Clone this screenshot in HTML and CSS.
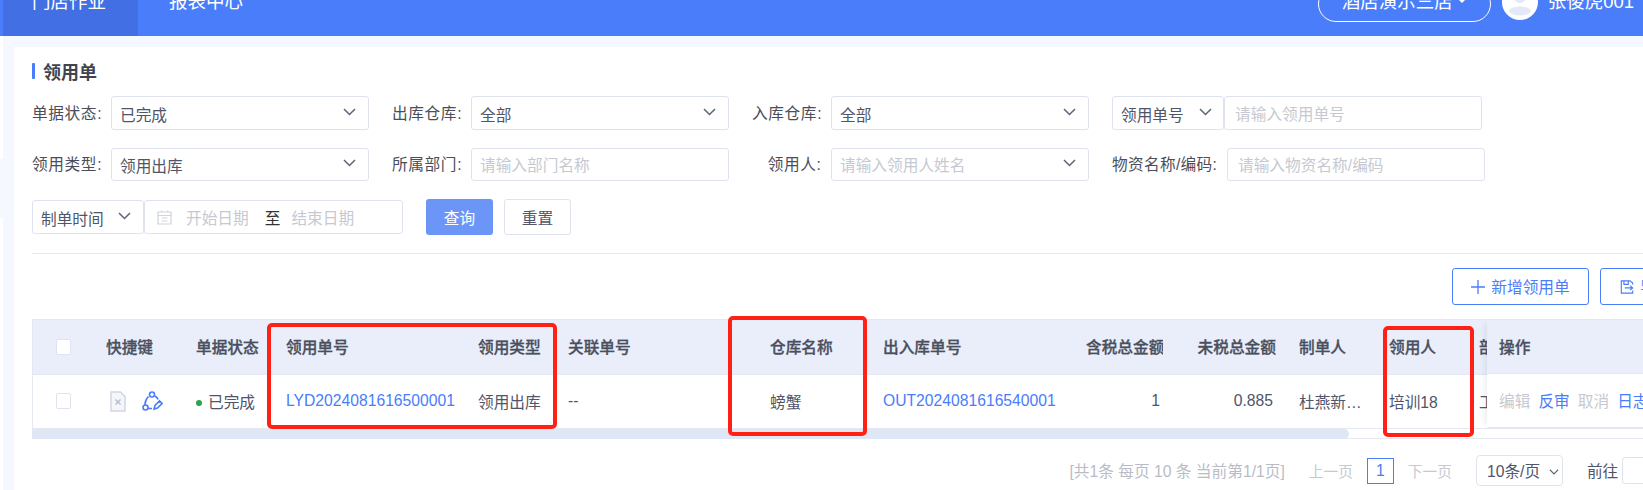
FILE: index.html
```html
<!DOCTYPE html>
<html lang="zh-CN">
<head>
<meta charset="utf-8">
<title>领用单</title>
<link rel="stylesheet" href="styles.css">
</head>
<body>
<header class="topbar">
  <div class="topbar-inner">
    <nav class="nav">
      <a class="nav-item nav-active">门店作业</a>
      <a class="nav-item nav-second">报表中心</a>
    </nav>
    <div class="top-right">
      <div class="store">酒店演示三店<span class="caret"></span></div>
      <svg class="avatar" viewBox="0 0 36 36"><circle cx="18" cy="18" r="18" fill="#fff"/><circle cx="18" cy="13" r="6" fill="#e3e9f8"/><ellipse cx="18" cy="27" rx="11" ry="4.5" fill="#e3e9f8"/></svg>
      <span class="user">张俊虎001</span>
    </div>
  </div>
</header>
<main class="page">
  <section class="card">
    <h1 class="title">领用单</h1>
    <div class="form-row">
      <div class="field"><span class="label">单据状态:</span><div class="control"><span class="value">已完成</span><svg class="chev" viewBox="0 0 13 8"><path d="M1 1l5.500 5.500L12 1"/></svg></div></div>
      <div class="field"><span class="label">出库仓库:</span><div class="control"><span class="value">全部</span><svg class="chev" viewBox="0 0 13 8"><path d="M1 1l5.500 5.500L12 1"/></svg></div></div>
      <div class="field"><span class="label">入库仓库:</span><div class="control"><span class="value">全部</span><svg class="chev" viewBox="0 0 13 8"><path d="M1 1l5.500 5.500L12 1"/></svg></div></div>
      <div class="combo">
        <div class="control combo-select"><span class="value">领用单号</span><svg class="chev" viewBox="0 0 13 8"><path d="M1 1l5.500 5.500L12 1"/></svg></div>
        <div class="control combo-input"><span class="placeholder">请输入领用单号</span></div>
      </div>
    </div>
    <div class="form-row form-row-second">
      <div class="field"><span class="label">领用类型:</span><div class="control"><span class="value">领用出库</span><svg class="chev" viewBox="0 0 13 8"><path d="M1 1l5.500 5.500L12 1"/></svg></div></div>
      <div class="field"><span class="label">所属部门:</span><div class="control"><span class="placeholder">请输入部门名称</span></div></div>
      <div class="field"><span class="label">领用人:</span><div class="control"><span class="placeholder">请输入领用人姓名</span><svg class="chev" viewBox="0 0 13 8"><path d="M1 1l5.500 5.500L12 1"/></svg></div></div>
      <div class="combo combo-labeled"><span class="label">物资名称/编码:</span><div class="control combo-input"><span class="placeholder">请输入物资名称/编码</span></div></div>
    </div>
    <div class="form-row form-row-last">
      <div class="control time-select"><span class="value">制单时间</span><svg class="chev" viewBox="0 0 13 8"><path d="M1 1l5.500 5.500L12 1"/></svg></div>
      <div class="control date-range">
        <svg class="cal" viewBox="0 0 15 15"><path d="M1 2h13v12H1zM1 5.500h13M4.500 8h6M4.500 11h6M4.500 .5v2M10.500 .5v2"/></svg>
        <span class="placeholder date-start">开始日期</span><span class="to">至</span><span class="placeholder">结束日期</span>
      </div>
      <button class="btn btn-primary">查询</button>
      <button class="btn btn-default">重置</button>
    </div>
    <div class="divider"></div>
    <div class="toolbar">
      <button class="btn-outline"><svg class="tool-icon" viewBox="0 0 14 14"><path d="M7 0v14M0 7h14"/></svg>新增领用单</button>
      <button class="btn-outline btn-save"><svg class="tool-icon" viewBox="0 0 15 16"><path d="M14 5V3.500L11 1H1v14h13v-3M4 1v4h5V1M5 9h9M11 6.500L14 9l-3 2.500"/></svg>导出</button>
    </div>
    <div class="table-wrap">
      <table class="data">
        <colgroup>
          <col class="c-check"><col class="c-keys"><col class="c-status"><col class="c-no"><col class="c-type"><col class="c-rel"><col class="c-wh"><col class="c-out"><col class="c-tax"><col class="c-notax"><col class="c-maker"><col class="c-user"><col class="c-dept">
        </colgroup>
        <thead>
          <tr>
            <th><span class="checkbox"></span></th>
            <th>快捷键</th>
            <th>单据状态</th>
            <th>领用单号</th>
            <th>领用类型</th>
            <th>关联单号</th>
            <th>仓库名称</th>
            <th>出入库单号</th>
            <th class="num">含税总金额</th>
            <th class="num">未税总金额</th>
            <th class="pad">制单人</th>
            <th>领用人</th>
            <th>部门</th>
          </tr>
        </thead>
        <tbody>
          <tr>
            <td><span class="checkbox"></span></td>
            <td>
              <div class="quick">
                <svg class="q-doc" viewBox="0 0 16 21"><path d="M1 1h9.500L15 5.500V20H1z"/><path class="q-x" d="M5.500 8.500l5 5M10.500 8.500l-5 5"/></svg>
                <svg class="q-edit" viewBox="0 0 21 21"><circle cx="10" cy="3.500" r="2.500"/><circle cx="3.500" cy="16.500" r="2.500"/><path d="M6.500 5.500C4 8 2.800 10.500 3 14M13 5c1.500 1 2.500 2 3.200 3.500M6.200 17.500H10M12 18l1-3.500 4.500-4.500 2.500 2.500-4.500 4.500z"/></svg>
              </div>
            </td>
            <td><span class="dot"></span>已完成</td>
            <td><a class="link">LYD2024081616500001</a></td>
            <td>领用出库</td>
            <td>--</td>
            <td>螃蟹</td>
            <td><a class="link">OUT2024081616540001</a></td>
            <td class="num num-cell">1</td>
            <td class="num num-cell">0.885</td>
            <td class="pad">杜燕新…</td>
            <td>培训18</td>
            <td>工程部</td>
          </tr>
        </tbody>
      </table>
      <div class="fixed-col">
        <div class="fixed-head">操作</div>
        <div class="fixed-cell"><span class="muted">编辑</span><a class="link">反审</a><span class="muted">取消</span><a class="link">日志</a></div>
      </div>
      <div class="scroll-track"><div class="scroll-thumb"></div></div>
    </div>
    <div class="pager">
      <span class="pager-total">[共1条 每页 10 条 当前第1/1页]</span>
      <span class="pager-prev">上一页</span>
      <span class="pager-cur">1</span>
      <span class="pager-next">下一页</span>
      <div class="pager-size">10条/页<svg class="chev chev-small" viewBox="0 0 13 8"><path d="M1 1l5.500 5.500L12 1"/></svg></div>
      <span class="pager-go">前往</span>
      <span class="pager-input"></span>
      <span class="pager-go">页</span>
    </div>
  </section>
  <div class="mark mark-a"></div>
  <div class="mark mark-b"></div>
  <div class="mark mark-c"></div>
</main>
</body>
</html>
```
FILE: styles.css
```css
* { box-sizing: border-box; }
html, body { margin: 0; height: 490px; overflow: hidden; }
body {
  width: 1643px;
  background: #fff;
  font-family: "Liberation Sans", "Noto Sans CJK SC", sans-serif;
  font-size: 15.700px;
  color: #50556a;
}
.topbar { height: 36px; background: #4a7dfa; overflow: hidden; }
.topbar-inner {
  height: 72px;
  margin-top: -36px;
  display: flex;
  justify-content: space-between;
  color: #fff;
}
.nav { display: flex; padding-left: 3px; }
.nav-item { font-size: 18.500px; display: flex; align-items: center; height: 72px; }
.nav-active { width: 135px; padding-left: 29px; background: #4270e4; }
.nav-second { padding-left: 31px; }
.top-right { display: flex; align-items: center; padding-right: 9px; }
.store {
  width: 173px;
  height: 36px;
  margin-top: 8px;
  border: 1px solid #fff;
  border-radius: 18px;
  display: flex;
  align-items: center;
  padding: 0 0 8px 23px;
  font-size: 18.500px;
  white-space: nowrap;
}
.caret {
  margin-left: 4px;
  border: 5px solid transparent;
  border-top-color: #fff;
  border-bottom-width: 0;
}
.avatar { width: 36px; height: 36px; margin: 4px 10px 0 11px; }
.user { font-size: 18.500px; white-space: nowrap; }
.page {
  position: relative;
  height: 454px;
  margin-left: 3px;
  padding: 11px 0 0 11px;
  background: #f5f8ff;
}
.card { width: 1680px; height: 443px; background: #fff; padding: 14px 0 0 18px; }
.title {
  margin: 0 0 15px;
  height: 20px;
  font-size: 18px;
  font-weight: 700;
  color: #40444f;
  display: flex;
  align-items: center;
  gap: 8px;
}
.title::before {
  content: "";
  width: 3px;
  height: 16px;
  border-radius: 1px;
  background: #4a7dfa;
}
.form-row { display: flex; gap: 23px; height: 34px; margin-bottom: 18px; }
.form-row-second { height: 33px; margin-bottom: 18px; }
.form-row-last { height: 36px; gap: 0; align-items: center; }
.field { width: 337px; display: flex; justify-content: space-between; align-items: center; }
.label { white-space: nowrap; color: #4a4e5a; margin-top: -2px; letter-spacing: 0.600px; }
.field .label { width: 69.500px; text-align: right; }
.control {
  height: 100%;
  width: 258px;
  flex: none;
  background: #fff;
  border: 1px solid #dfe3f0;
  border-radius: 3px;
  display: flex;
  align-items: center;
  justify-content: space-between;
  padding: 0 12px 0 8px;
}
.value { white-space: nowrap; color: #50556a; margin-top: 2px; }
.placeholder { white-space: nowrap; color: #c6c9d1; }
.chev { width: 13px; height: 8px; flex: none; margin-top: -3px; }
.chev path { fill: none; stroke: #5d6477; stroke-width: 1.500; }
.combo { display: flex; align-items: center; height: 100%; }
.combo-select { width: 112px; padding-right: 11px; }
.combo-input { justify-content: flex-start; padding-left: 10px; }
.combo-labeled .label { width: 106px; margin-right: 9px; letter-spacing: 0.300px; }
.time-select { width: 112px; height: 34px; }
.date-range { width: 259px; height: 34px; justify-content: flex-start; padding-left: 12px; }
.cal { width: 15px; height: 15px; flex: none; }
.cal path { fill: none; stroke: #cfd3dc; stroke-width: 1.200; }
.date-start { margin-left: 14px; }
.to { margin: 0 11px 0 16px; color: #333; }
.btn {
  height: 36px;
  border-radius: 3px;
  font: inherit;
  cursor: pointer;
}
.btn-primary { width: 67px; margin-left: 23px; border: 0; background: #6c95f8; color: #fff; }
.btn-default { width: 67px; margin-left: 11px; border: 1px solid #dfe3f0; background: #fff; color: #50556a; }
.divider { height: 1px; margin-top: 18px; background: #e6e9f3; }
.toolbar { display: flex; justify-content: flex-end; gap: 11px; margin: 14px 0; }
.btn-outline {
  height: 37px;
  width: 137px;
  border: 1px solid #4a7dfa;
  border-radius: 3px;
  background: #fff;
  color: #4a7dfa;
  font: inherit;
  display: flex;
  align-items: center;
  justify-content: center;
  gap: 6px;
  padding: 0;
}
.btn-save { width: 94px; justify-content: flex-start; padding-left: 19px; }
.tool-icon { width: 14px; height: 14px; flex: none; }
.tool-icon path { fill: none; stroke: #4a7dfa; stroke-width: 1.300; }
.table-wrap { position: relative; width: 1662px; height: 120px; border: 1px solid #e4e8f3; border-width: 1px 0 1px 1px; }
.data { border-collapse: collapse; table-layout: fixed; width: 1661px; }
.c-check { width: 73px; }
.c-keys { width: 90px; }
.c-status { width: 90px; }
.c-no { width: 192px; }
.c-type { width: 90px; }
.c-rel { width: 202px; }
.c-wh { width: 113px; }
.c-out { width: 203px; }
.c-tax { width: 77px; }
.c-notax { width: 113px; }
.c-maker { width: 113px; }
.c-user { width: 90px; }
.data th, .data td {
  height: 54px;
  padding: 0;
  text-align: left;
  white-space: nowrap;
  overflow: hidden;
  border-bottom: 1px solid #e4e8f3;
}
.data th { background: #e9eefa; font-weight: 500; color: #4a4f5e; -webkit-text-stroke: 0.300px #4a4f5e; }
.data th.num, .data td.num { text-align: right; }
.data td.num-cell { padding-right: 3px; }
.data th.pad, .data td.pad { padding-left: 23px; }
.checkbox {
  display: block;
  width: 15px;
  height: 16px;
  margin-left: 23px;
  background: #fff;
  border: 1px solid #dfe3ef;
  border-radius: 2px;
}
.quick { display: flex; align-items: center; gap: 16px; padding-left: 4px; }
.q-doc { width: 16px; height: 21px; }
.q-doc path { fill: #f4f6fb; stroke: #d0d6e5; stroke-width: 1.500; }
.q-doc .q-x { stroke: #b6bdcf; }
.q-edit { width: 21px; height: 21px; }
.q-edit circle, .q-edit path { fill: none; stroke: #4a7dfa; stroke-width: 1.600; }
.dot {
  display: inline-block;
  width: 6px;
  height: 6px;
  border-radius: 50%;
  background: #2ba24c;
  margin-right: 6px;
  vertical-align: 2px;
}
.link { color: #4a7dfa; }
.fixed-col {
  position: absolute;
  left: 1454px;
  top: 0;
  width: 207px;
  height: 108px;
  background: #fff;
  box-shadow: -6px 0 6px -4px rgba(60, 70, 100, 0.10);
}
.fixed-head {
  height: 54px;
  background: #e9eefa;
  padding-left: 12px;
  display: flex;
  align-items: center;
  font-weight: 500;
  color: #4a4f5e;
  -webkit-text-stroke: 0.300px #4a4f5e;
  border-bottom: 1px solid #e4e8f3;
}
.fixed-cell {
  height: 54px;
  padding-left: 12px;
  display: flex;
  align-items: center;
  gap: 8px;
  border-bottom: 1px solid #e4e8f3;
  white-space: nowrap;
}
.muted { color: #c6c9d1; }
.scroll-track { height: 10px; }
.scroll-thumb { width: 1316px; height: 10px; background: #dfe6f5; border-radius: 0 5px 5px 0; }
.pager { display: flex; align-items: center; justify-content: flex-end; height: 31px; margin-top: 16px; }
.pager-total { color: #b9bcc6; white-space: nowrap; }
.pager-prev { color: #c6c9d1; margin-left: 24px; white-space: nowrap; font-size: 14.700px; }
.pager-cur {
  width: 27px;
  height: 26px;
  margin-left: 14px;
  border: 1px solid #4a7dfa;
  color: #4a7dfa;
  display: flex;
  align-items: center;
  justify-content: center;
}
.pager-next { color: #c6c9d1; margin-left: 14px; white-space: nowrap; font-size: 14.700px; }
.pager-size {
  width: 87px;
  height: 31px;
  margin-left: 24px;
  border: 1px solid #dfe3f0;
  border-radius: 4px;
  display: flex;
  align-items: center;
  gap: 9px;
  padding-left: 10px;
  white-space: nowrap;
}
.chev-small { width: 10px; height: 6px; margin-top: 2px; }
.pager-go { white-space: nowrap; }
.pager-size + .pager-go { margin-left: 24px; }
.pager-input {
  width: 51px;
  height: 27px;
  margin: 0 5px 0 4px;
  border: 1px solid #dfe3f0;
  border-radius: 3px;
}
.mark { position: absolute; border: 4px solid #ff2016; border-radius: 5px; }
.mark-a { left: 264px; top: 287px; width: 290px; height: 106px; }
.mark-b { left: 725px; top: 280px; width: 139px; height: 120px; }
.mark-c { left: 1380px; top: 290px; width: 91px; height: 111px; }
.page::before {
  content: "";
  position: absolute;
  left: -3px;
  top: 123px;
  width: 3px;
  height: 59px;
  background: #f5f8ff;
}
```
